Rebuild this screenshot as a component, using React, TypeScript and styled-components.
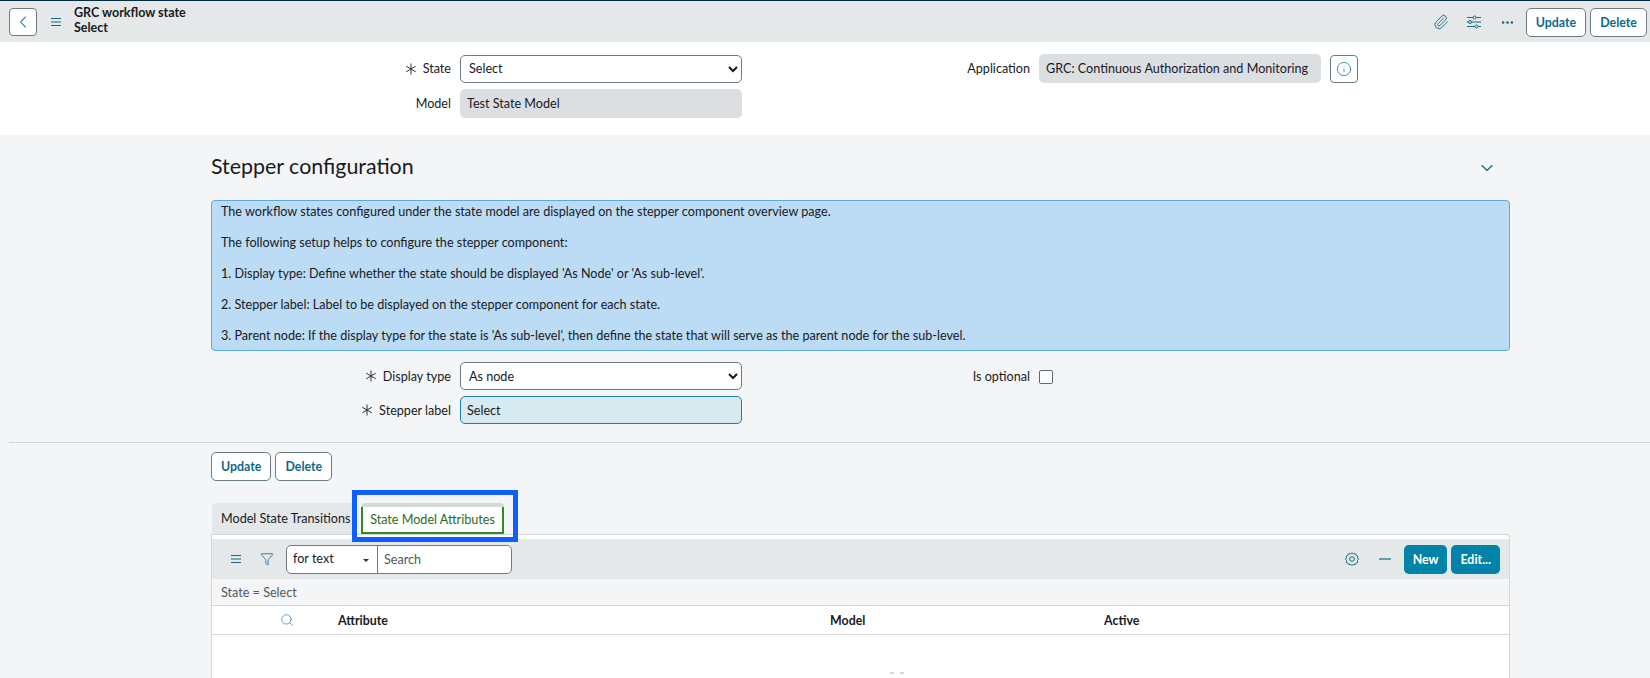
import styled, { createGlobalStyle } from 'styled-components';
import { ChevronDown, ChevronLeft, Ellipsis, Funnel, Info, Paperclip, Search } from 'lucide-react';

const teal = '#146a88';

function MenuIcon() {
  return (
    <svg width="12" height="10" viewBox="0 0 12 10" fill="none" stroke={teal} strokeWidth="1.2">
      <path d="M1 1.5h10M1 5h10M1 8.5h10" />
    </svg>
  );
}

function SlidersIcon() {
  return (
    <svg width="16" height="14" viewBox="0 0 16 14" fill="none" stroke={teal} strokeWidth="1">
      <path d="M1 2.5h6M10 2.5h5M1 7h1.5M5.5 7h9.5M1 11.5h8M12 11.5h3" />
      <circle cx="8.5" cy="2.5" r="1.5" />
      <circle cx="4" cy="7" r="1.5" />
      <circle cx="10.5" cy="11.5" r="1.5" />
    </svg>
  );
}

function GearIcon() {
  return (
    <svg width="14" height="14" viewBox="0 0 14 14" fill="none" stroke={teal} strokeWidth="1">
      <path d="M7 .8l1.5 1 1.8-.2.8 1.6 1.6.8-.2 1.8 1 1.2-1 1.5.2 1.7-1.6.8-.8 1.6-1.8-.2-1.5 1-1.5-1-1.8.2-.8-1.6-1.6-.8.2-1.7-1-1.5 1-1.2-.2-1.800 1.600-.8.8-1.600 1.800.2z" />
      <circle cx="7" cy="7" r="2.3" />
    </svg>
  );
}

function DashIcon() {
  return (
    <svg width="12" height="4" viewBox="0 0 12 4" fill="none" stroke="#0c6a8a" strokeWidth="1.2">
      <path d="M0 2h12" />
    </svg>
  );
}

function RequiredMark() {
  return (
    <svg width="12" height="12" viewBox="0 0 12 12" fill="none" stroke="#2b3540" strokeWidth="1">
      <path d="M6 .5v11M1.2 3.2l9.6 5.600M10.800 3.200l-9.600 5.600" />
    </svg>
  );
}

function App() {
  return (
    <Page>
      <GlobalStyle />
      <Header>
        <IconButton aria-label="Back">
          <ChevronLeft size={20} strokeWidth={1.3} color="#3d8fae" />
        </IconButton>
        <HeaderMenu>
          <MenuIcon />
        </HeaderMenu>
        <HeaderTitle>
          <span>GRC workflow state</span>
          <span>Select</span>
        </HeaderTitle>
        <HeaderActions>
          <HeaderIcon>
            <Paperclip size={16} strokeWidth={1.4} color={teal} />
          </HeaderIcon>
          <HeaderIcon>
            <SlidersIcon />
          </HeaderIcon>
          <HeaderIcon>
            <Ellipsis size={15} strokeWidth={2.2} color={teal} />
          </HeaderIcon>
          <OutlineButton>Update</OutlineButton>
          <OutlineButton>Delete</OutlineButton>
        </HeaderActions>
      </Header>

      <TopSection>
        <FormRow>
          <Label>
            <RequiredMark />
            State
          </Label>
          <SelectField defaultValue="Select">
            <option>Select</option>
          </SelectField>
          <Label>Application</Label>
          <ReadOnly>GRC: Continuous Authorization and Monitoring</ReadOnly>
          <IconButton aria-label="Info">
            <Info size={16} strokeWidth={1.2} color="#1d7fa6" />
          </IconButton>
        </FormRow>
        <FormRow>
          <Label>Model</Label>
          <ReadOnly>Test State Model</ReadOnly>
        </FormRow>
      </TopSection>

      <SectionHead>
        <Heading>Stepper configuration</Heading>
        <ChevronDown size={20} strokeWidth={1.4} color={teal} />
      </SectionHead>

      <InfoBox>
        <p>The workflow states configured under the state model are displayed on the stepper component overview page.</p>
        <p>The following setup helps to configure the stepper component:</p>
        <p>1. Display type: Define whether the state should be displayed 'As Node' or 'As sub-level'.</p>
        <p>2. Stepper label: Label to be displayed on the stepper component for each state.</p>
        <p>3. Parent node: If the display type for the state is 'As sub-level', then define the state that will serve as the parent node for the sub-level.</p>
      </InfoBox>

      <StepperForm>
        <FormRow>
          <Label>
            <RequiredMark />
            Display type
          </Label>
          <SelectField defaultValue="As node">
            <option>As node</option>
          </SelectField>
          <Label>Is optional</Label>
          <CheckBox />
        </FormRow>
        <FormRow>
          <Label>
            <RequiredMark />
            Stepper label
          </Label>
          <TextField>Select</TextField>
        </FormRow>
      </StepperForm>

      <Divider />

      <BottomActions>
        <OutlineButton>Update</OutlineButton>
        <OutlineButton>Delete</OutlineButton>
      </BottomActions>

      <Tabs>
        <TabOff>Model State Transitions</TabOff>
        <TabOnWrap>
          <TabOn>State Model Attributes</TabOn>
          <Highlight />
        </TabOnWrap>
      </Tabs>

      <ListPanel>
        <ListToolbar>
          <ToolIcon $width={23}>
            <MenuIcon />
          </ToolIcon>
          <ToolIcon $width={39}>
            <Funnel size={14} strokeWidth={1.4} color={teal} />
          </ToolIcon>
          <SearchGroup>
            <ForText>
              for text
              <Caret />
            </ForText>
            <SearchText>Search</SearchText>
          </SearchGroup>
          <ToolRight>
            <ToolIcon $width={29}>
              <GearIcon />
            </ToolIcon>
            <ToolIcon $width={29}>
              <DashIcon />
            </ToolIcon>
            <FilledButton>New</FilledButton>
            <FilledButton>Edit...</FilledButton>
          </ToolRight>
        </ListToolbar>
        <Breadcrumb>State = Select</Breadcrumb>
        <TableHead>
          <SearchCell>
            <Search size={14} strokeWidth={1.4} color="#2f93b5" />
          </SearchCell>
          <ColHead>Attribute</ColHead>
          <ColHead>Model</ColHead>
          <ColHead>Active</ColHead>
        </TableHead>
        <TableBody>
          <LoadingDots>
            <i />
            <i />
          </LoadingDots>
        </TableBody>
      </ListPanel>
    </Page>
  );
}

export default App;

const GlobalStyle = createGlobalStyle`
  html, body {
    margin: 0;
    background: #f4f5f7;
  }
  * {
    box-sizing: border-box;
  }
`;

const Page = styled.div`
  width: 1650px;
  height: 678px;
  overflow: hidden;
  font-family: Lato, 'Liberation Sans', sans-serif;
  font-size: 12.6px;
  color: #293e40;
  background: #f4f5f7;
`;

const Header = styled.header`
  display: flex;
  align-items: center;
  height: 42px;
  padding: 1px 3px 0 9px;
  background: #e4e8e9;
  border-top: 1px solid #032d42;
`;

const IconButton = styled.button`
  display: flex;
  align-items: center;
  justify-content: center;
  width: 28px;
  height: 28px;
  padding: 0;
  background: #fff;
  border: 1px solid #6b7c85;
  border-radius: 4px;
`;

const HeaderMenu = styled.div`
  display: flex;
  margin-left: 13px;
`;

const HeaderTitle = styled.div`
  display: flex;
  flex-direction: column;
  margin: 0 0 5px 12px;
  font-size: 12.5px;
  font-weight: 700;
  line-height: 15px;
  color: #181a1f;
`;

const HeaderActions = styled.div`
  display: flex;
  align-items: center;
  gap: 4px;
  margin-left: auto;
`;

const HeaderIcon = styled.div`
  display: flex;
  justify-content: center;
  width: 29px;
`;

const OutlineButton = styled.button`
  height: 29px;
  padding: 0 9px;
  font-family: inherit;
  font-size: 12.4px;
  font-weight: 700;
  color: #0c6a8a;
  background: #fff;
  border: 1px solid #6b7c85;
  border-radius: 5px;
`;

const TopSection = styled.section`
  display: flex;
  flex-direction: column;
  gap: 6px;
  height: 93px;
  padding-top: 12px;
  background: #fff;
`;

const FormRow = styled.div`
  display: grid;
  grid-template-columns: 451px 282px 279px 282px 29px;
  column-gap: 9px;
  align-items: center;
`;

const Label = styled.label`
  display: flex;
  align-items: center;
  justify-content: flex-end;
  gap: 6px;
  font-size: 12.6px;
  color: #181a1f;
`;

const SelectField = styled.select`
  height: 28px;
  padding: 0 4px;
  font-family: inherit;
  font-size: 12.6px;
  color: #181a1f;
  background: #fff;
  border: 1px solid #6b7c85;
  border-radius: 5px;
`;

const ReadOnly = styled.div`
  display: flex;
  align-items: center;
  height: 29px;
  padding-left: 7px;
  font-size: 12.6px;
  color: #181a1f;
  white-space: nowrap;
  background: #dcdfe2;
  border-radius: 5px;
`;

const TextField = styled.div`
  display: flex;
  align-items: center;
  height: 28px;
  padding-left: 6px;
  font-size: 12.6px;
  color: #181a1f;
  background: #d6eaf0;
  border: 1px solid #1d7fa6;
  border-radius: 5px;
`;

const CheckBox = styled.span`
  width: 14px;
  height: 14px;
  margin-top: 1px;
  background: #fff;
  border: 1px solid #5b6a73;
  border-radius: 2px;
`;

const SectionHead = styled.div`
  display: flex;
  align-items: center;
  justify-content: space-between;
  height: 65px;
  padding: 0 153px 0 211px;
`;

const Heading = styled.h2`
  margin: 0 0 4px;
  font-size: 21.4px;
  font-weight: 400;
  color: #181a1f;
`;

const InfoBox = styled.div`
  display: flex;
  flex-direction: column;
  gap: 15px;
  height: 151px;
  margin: 0 140px 0 211px;
  padding: 3px 9px;
  font-size: 12.6px;
  line-height: 16px;
  color: #181a1f;
  background: #bcdbf4;
  border: 1px solid #5aaae0;
  border-radius: 4px;

  p {
    margin: 0;
  }
`;

const StepperForm = styled.div`
  display: flex;
  flex-direction: column;
  gap: 6px;
  padding-top: 11px;
`;

const Divider = styled.hr`
  height: 1px;
  margin: 18px 0 0 9px;
  background: #d3d6da;
  border: 0;
`;

const BottomActions = styled.div`
  display: flex;
  gap: 4px;
  padding: 9px 0 0 211px;
`;

const Tabs = styled.div`
  display: flex;
  align-items: stretch;
  gap: 5px;
  height: 31px;
  margin: 22px 0 0 212px;
`;

const TabOff = styled.div`
  display: flex;
  align-items: center;
  width: 144px;
  padding-left: 9px;
  white-space: nowrap;
  font-size: 12.6px;
  color: #181a1f;
  background: #e4e8e9;
  border-radius: 4px 4px 0 0;
`;

const TabOnWrap = styled.div`
  position: relative;
  display: flex;
  width: 143px;
  padding-top: 4px;
  background: #d3d8d9;
  border-radius: 4px 4px 0 0;
`;

const TabOn = styled.div`
  display: flex;
  flex: 1;
  align-items: center;
  justify-content: center;
  font-size: 12.6px;
  color: #2a6a1e;
  white-space: nowrap;
  background: #fff;
  border: 2px solid #2e8b1f;
  border-top: 0;
`;

const Highlight = styled.div`
  position: absolute;
  top: -13px;
  left: -9px;
  width: 166px;
  height: 52px;
  border: 5px solid #0f5fff;
`;

const ListPanel = styled.div`
  display: flex;
  flex-direction: column;
  height: 144px;
  margin: 0 140px 0 211px;
  padding-top: 4px;
  background: #fff;
  border-top: 1px solid #d3d6da;
  border-left: 1px solid #d3d6da;
  border-right: 1px solid #d3d6da;
  border-radius: 0 4px 0 0;
`;

const ListToolbar = styled.div`
  display: flex;
  align-items: center;
  height: 40px;
  padding: 0 9px 0 12px;
  background: #e4e8e9;
`;

const ToolIcon = styled.div<{ $width: number }>`
  display: flex;
  justify-content: center;
  width: ${(props) => props.$width}px;
`;

const SearchGroup = styled.div`
  display: flex;
  width: 226px;
  height: 29px;
  background: #fff;
  border: 1px solid #6b7c85;
  border-radius: 5px;
`;

const ForText = styled.div`
  position: relative;
  display: flex;
  align-items: center;
  width: 91px;
  padding: 0 0 2px 6px;
  font-size: 12.6px;
  color: #181a1f;
  border-right: 1px solid #6b7c85;
`;

const Caret = styled.span`
  position: absolute;
  top: 13px;
  right: 8px;
  border-top: 3px solid #333;
  border-left: 3px solid transparent;
  border-right: 3px solid transparent;
`;

const SearchText = styled.div`
  display: flex;
  align-items: center;
  padding-left: 6px;
  font-size: 12.6px;
  color: #4f5b63;
`;

const ToolRight = styled.div`
  display: flex;
  align-items: center;
  gap: 4px;
  margin-left: auto;
`;

const FilledButton = styled.button`
  height: 29px;
  padding: 0 9px;
  font-family: inherit;
  font-size: 12.4px;
  font-weight: 700;
  color: #fff;
  background: #0083a8;
  border: 0;
  border-radius: 5px;
`;

const Breadcrumb = styled.div`
  display: flex;
  align-items: center;
  height: 27px;
  padding-left: 9px;
  font-size: 12.6px;
  color: #4f5b63;
  background: #f4f5f7;
  border-bottom: 1px solid #d3d6da;
`;

const TableHead = styled.div`
  display: grid;
  grid-template-columns: 126px 492px 274px 1fr;
  align-items: center;
  height: 29px;
  border-bottom: 1px solid #d3d6da;
`;

const SearchCell = styled.div`
  display: flex;
  justify-content: flex-end;
  padding-right: 44px;
`;

const ColHead = styled.div`
  font-size: 12.4px;
  font-weight: 700;
  color: #181a1f;
`;

const TableBody = styled.div`
  display: flex;
  flex: 1;
  justify-content: center;
  background: #fff;
`;

const LoadingDots = styled.div`
  display: flex;
  gap: 6px;
  margin-top: 37px;
  margin-left: 72px;

  i {
    width: 4px;
    height: 2px;
    background: #d5d8dc;
  }
`;
